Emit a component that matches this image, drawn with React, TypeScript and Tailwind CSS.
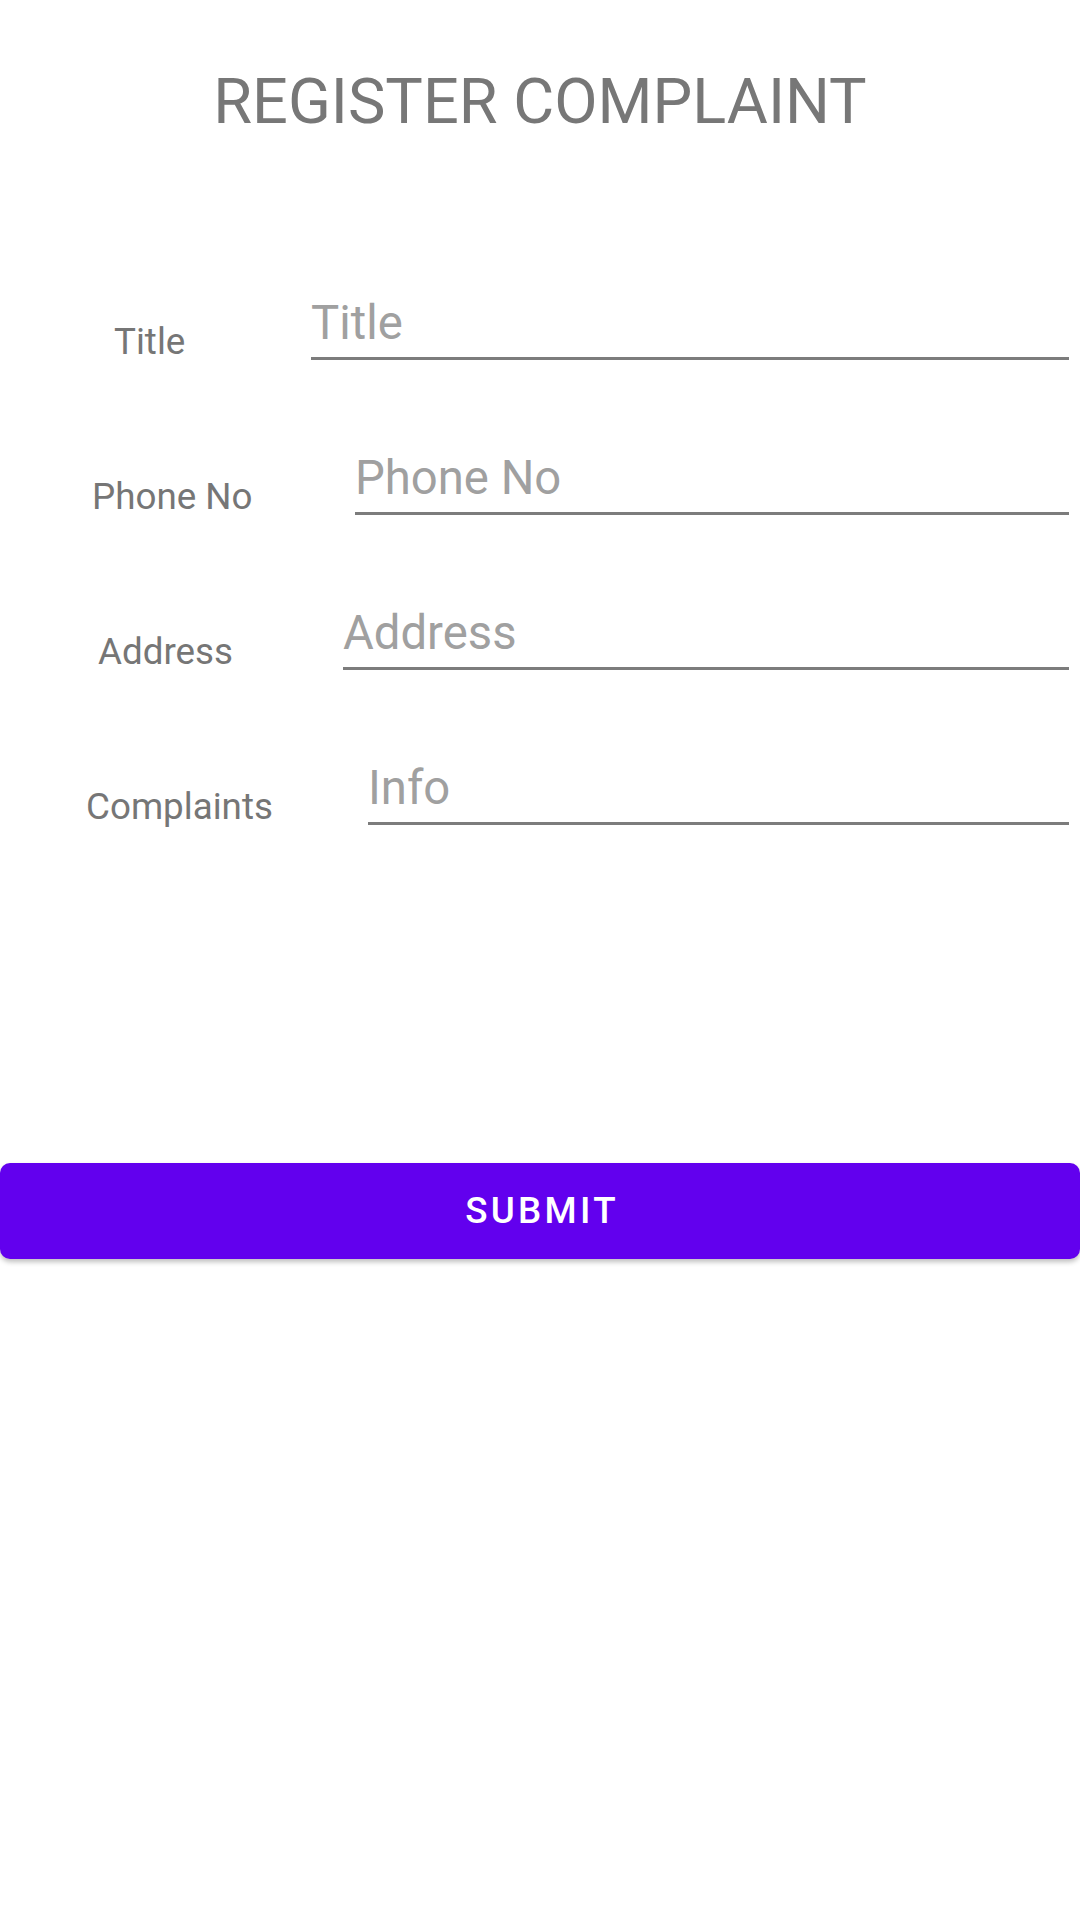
import React from "react";

type Row = { label: string; placeholder: string; labelLeft: number; inputLeft: number };

const rows: Row[] = [
  { label: "Title", placeholder: "Title", labelLeft: 114, inputLeft: 311 },
  { label: "Phone No", placeholder: "Phone No", labelLeft: 92, inputLeft: 355 },
  { label: "Address", placeholder: "Address", labelLeft: 98, inputLeft: 343 },
  { label: "Complaints", placeholder: "Info", labelLeft: 86, inputLeft: 368 },
];

export default function App() {
  return (
    <div className="w-[1080px] h-[1920px] bg-white font-['Roboto','Liberation_Sans',sans-serif] flex flex-col">
      <h1 className="pt-[65px] text-center text-[63px] leading-[74px] font-normal text-[#777777]">
        REGISTER COMPLAINT
      </h1>

      <div className="mt-[151px] flex flex-col gap-[85px]">
        {rows.map((r) => (
          <div key={r.label} className="flex items-start h-[70px]">
            <div
              className="shrink-0 mt-[30px] text-[36.75px] leading-[43px] text-[#767676] whitespace-nowrap"
              style={{ width: r.inputLeft, paddingLeft: r.labelLeft }}
            >
              {r.label}
            </div>
            <div className="flex-1 mr-[11px] mt-[6px] flex flex-col">
              <input
                type="text"
                placeholder={r.placeholder}
                className="h-[55px] w-full p-0 bg-transparent outline-none border-0 text-[47.25px] leading-[55px] text-[#333333] placeholder:text-[#a0a0a0] font-['Roboto','Liberation_Sans',sans-serif]"
              />
              <div className="mt-[6px] h-[3px] bg-[#7c7c7c]" />
            </div>
          </div>
        ))}
      </div>

      <button
        type="button"
        className="mt-[338px] w-[1080px] h-[96px] rounded-[10px] bg-[#6200ee] text-white text-[36.75px] font-medium tracking-[3.3px] pl-[4px] shadow-[0_3px_5px_rgba(0,0,0,0.25)] flex items-center justify-center font-['Roboto','Liberation_Sans',sans-serif]"
      >
        SUBMIT
      </button>
    </div>
  );
}
